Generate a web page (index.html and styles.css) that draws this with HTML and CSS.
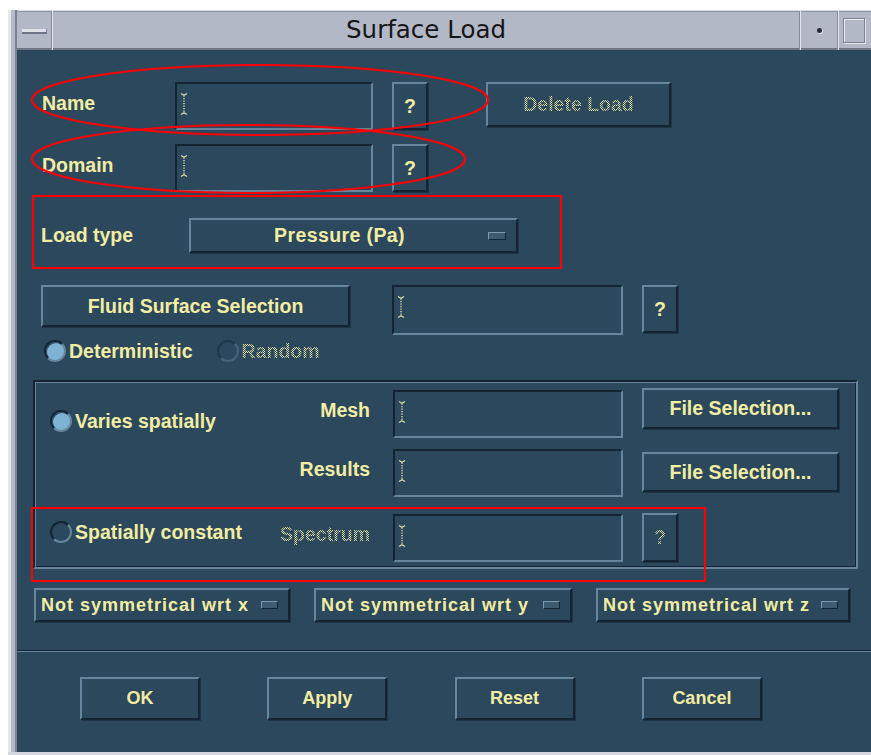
FILE: index.html
```html
<!DOCTYPE html>
<html lang="en">
<head>
<meta charset="utf-8">
<title>Surface Load</title>
<link rel="stylesheet" href="styles.css">
</head>
<body>
<svg class="defs" width="0" height="0" aria-hidden="true">
  <symbol id="ibeam" viewBox="0 0 8 24">
    <path d="M1 1.5 L4 3.2 L7 1.5 M1 22.5 L4 20.8 L7 22.5" fill="none" stroke="#e2dda4" stroke-width="1.2"/>
    <path d="M4 3.5 V20.5" fill="none" stroke="#e2dda4" stroke-width="1.4" stroke-dasharray="1.2 1.3"/>
  </symbol>
</svg>

<div class="window">
  <div class="frame-left"></div>
  <div class="window-main">
    <div class="titlebar">
      <div class="tb-cell tb-menu"><span class="tb-dash"></span></div>
      <div class="tb-title">Surface Load</div>
      <div class="tb-cell tb-min"><span class="tb-dot"></span></div>
      <div class="tb-cell tb-max"><span class="tb-square"></span></div>
    </div>

    <div class="dialog">
      <div class="content">
        <div class="row row-name">
          <span class="label lab-top">Name</span>
          <div class="field f-top"><svg class="ibeam"><use href="#ibeam"/></svg></div>
          <button class="btn q">?</button>
          <button class="btn del"><span class="dis">Delete Load</span></button>
        </div>

        <div class="row row-domain">
          <span class="label lab-top">Domain</span>
          <div class="field f-top"><svg class="ibeam"><use href="#ibeam"/></svg></div>
          <button class="btn q">?</button>
        </div>

        <div class="row row-type">
          <span class="label lab-type">Load type</span>
          <button class="btn option opt-type">
            <span class="opt-text">Pressure (Pa)</span>
            <span class="cascade"></span>
          </button>
        </div>

        <div class="row row-fluid">
          <button class="btn fluid">Fluid Surface Selection</button>
          <div class="field f-fluid"><svg class="ibeam"><use href="#ibeam"/></svg></div>
          <button class="btn q q-fluid">?</button>
        </div>

        <div class="row row-radio">
          <span class="radio on"></span>
          <span class="label rlab">Deterministic</span>
          <span class="radio off dim rand-radio"></span>
          <span class="label rlab"><span class="dis">Random</span></span>
        </div>

        <div class="frame">
          <div class="frow frow-mesh">
            <div class="fleft fleft-varies">
              <span class="radio on"></span>
              <span class="label rlab">Varies spatially</span>
            </div>
            <span class="label flabel">Mesh</span>
            <div class="field f-frame"><svg class="ibeam"><use href="#ibeam"/></svg></div>
            <button class="btn filesel fs-mesh">File Selection...</button>
          </div>
          <div class="frow frow-results">
            <div class="fleft"></div>
            <span class="label flabel">Results</span>
            <div class="field f-frame"><svg class="ibeam"><use href="#ibeam"/></svg></div>
            <button class="btn filesel fs-results">File Selection...</button>
          </div>
          <div class="frow frow-spec">
            <div class="fleft fleft-const">
              <span class="radio off"></span>
              <span class="label rlab">Spatially constant</span>
            </div>
            <span class="label flabel"><span class="dis">Spectrum</span></span>
            <div class="field f-frame"><svg class="ibeam"><use href="#ibeam"/></svg></div>
            <button class="btn q q-spec"><span class="dis">?</span></button>
          </div>
        </div>

        <div class="row row-sym">
          <button class="btn option sym sym-x"><span class="sym-text">Not symmetrical wrt x</span><span class="cascade"></span></button>
          <button class="btn option sym sym-y"><span class="sym-text">Not symmetrical wrt y</span><span class="cascade"></span></button>
          <button class="btn option sym sym-z"><span class="sym-text">Not symmetrical wrt z</span><span class="cascade"></span></button>
        </div>
      </div>

      <div class="sep"></div>

      <div class="actions">
        <button class="btn act">OK</button>
        <button class="btn act">Apply</button>
        <button class="btn act">Reset</button>
        <button class="btn act">Cancel</button>
      </div>

      <!-- red markup drawn over the form -->
      <svg class="marks" width="880" height="702" viewBox="0 0 880 702">
        <ellipse cx="243" cy="50" rx="228" ry="35"/>
        <ellipse cx="231.5" cy="109" rx="216.5" ry="34"/>
        <rect x="16" y="146" width="528" height="72"/>
        <rect x="15" y="458" width="673" height="73"/>
      </svg>
    </div>
  </div>
</div>
</body>
</html>
```

FILE: styles.css
```css
* {
  box-sizing: border-box;
}

html,
body {
  margin: 0;
  padding: 0;
}

body {
  width: 871px;
  height: 755px;
  overflow: hidden;
  background: #ffffff;
  font-family: "Liberation Sans", Arial, sans-serif;
}

.defs {
  position: absolute;
  width: 0;
  height: 0;
}

/* ---------- window frame ---------- */
.window {
  margin: 10px 0 0 8px;
  width: 880px;
  height: 745px;
  display: flex;
  border-bottom: 3px solid #d4d7df;
}

.frame-left {
  width: 9px;
  flex: none;
  background: linear-gradient(to right, #e6e8ee 0 3px, #b6bbc8 3px 7px, #7a8192 7px);
}

.window-main {
  flex: 1;
  display: flex;
  flex-direction: column;
}

.titlebar {
  height: 40px;
  flex: none;
  display: flex;
  background: #b3b8c7;
  border-top: 1px solid #d9dce4;
  box-shadow: inset 0 1px 0 #8d93a3, inset 0 -2px 0 #6f7687;
}

.tb-cell {
  position: relative;
  flex: none;
}

.tb-menu {
  width: 35px;
  border-right: 1px solid #858b9b;
}

.tb-dash {
  position: absolute;
  left: 5px;
  top: 18px;
  width: 25px;
  height: 5px;
  background: #dfe2e8;
  border-bottom: 2px solid #6f7586;
  border-right: 1px solid #7d8393;
}

.tb-title {
  flex: 1;
  text-align: center;
  font-family: "DejaVu Sans", sans-serif;
  font-size: 24.5px;
  line-height: 38px;
  color: #161616;
  border-left: 1px solid #e2e5ec;
  border-right: 1px solid #858b9b;
}

.tb-min {
  width: 38px;
  border-left: 1px solid #e2e5ec;
  border-right: 1px solid #858b9b;
}

.tb-dot {
  position: absolute;
  left: 16px;
  top: 17px;
  width: 5px;
  height: 5px;
  border-radius: 50%;
  background: #2a2c33;
  box-shadow: 1px 1px 0 #e6e8ee;
}

.tb-max {
  width: 50px;
  border-left: 1px solid #e2e5ec;
}

.tb-square {
  position: absolute;
  left: 4px;
  top: 7px;
  width: 22px;
  height: 25px;
  border: 1px solid #7b8192;
  box-shadow: inset 1px 1px 0 #eef0f4, 1px 1px 0 #e4e6ec;
}

/* ---------- dialog body ---------- */
.dialog {
  flex: 1;
  position: relative;
  background: #2b485d;
}

.content {
  padding: 32px 0 0 16px;
}

.row {
  display: flex;
  align-items: flex-start;
}

.label {
  color: #f3eda3;
  font-weight: bold;
  font-size: 19.5px;
  white-space: nowrap;
}

/* stippled insensitive text */
.dis {
  color: transparent;
  background: repeating-conic-gradient(#ebe4a0 0 25%, transparent 0 50%) 0 0 / 2px 2px;
  -webkit-background-clip: text;
  background-clip: text;
}

/* bevels */
.btn {
  margin: 0;
  padding: 0;
  font-family: "Liberation Sans", Arial, sans-serif;
  font-weight: bold;
  font-size: 19.5px;
  color: #f3eda3;
  background: #2b485d;
  border: 2px solid;
  border-color: #67869d #142433 #142433 #67869d;
  box-shadow: 1px 1px 0 #1f3547;
  white-space: nowrap;
  display: flex;
  align-items: center;
  justify-content: center;
}

.field {
  flex: none;
  background: #2b485d;
  border: 2px solid;
  border-color: #142433 #67869d #67869d #142433;
  padding: 8px 0 0 3px;
}

.ibeam {
  display: block;
  width: 8px;
  height: 24px;
}

/* name / domain */
.row-name {
  height: 48px;
  margin-left: 9px;
}

.row-domain {
  height: 48px;
  margin-left: 9px;
  margin-top: 14px;
}

.lab-top {
  width: 133px;
  line-height: 42px;
}

.f-top {
  width: 198px;
  height: 48px;
}

.q {
  width: 36px;
  height: 48px;
  margin-left: 19px;
}

.del {
  width: 185px;
  height: 45px;
  margin-left: 58px;
}

/* load type */
.row-type {
  height: 35px;
  margin-top: 26px;
  margin-left: 8px;
}

.lab-type {
  width: 148px;
  line-height: 35px;
}

.option {
  justify-content: flex-start;
}

.opt-type {
  width: 329px;
  height: 35px;
}

.opt-text {
  flex: 1;
  text-align: center;
  letter-spacing: 0.4px;
}

.cascade {
  flex: none;
  width: 18px;
  height: 8px;
  background: #3d5c72;
  border: 1px solid;
  border-color: #7c98ad #142433 #142433 #7c98ad;
  margin-right: 10px;
}

/* fluid surface */
.row-fluid {
  margin-top: 32px;
  margin-left: 8px;
}

.fluid {
  width: 309px;
  height: 42px;
}

.f-fluid {
  width: 231px;
  height: 50px;
  margin-left: 42px;
}

/* radios */
.row-radio {
  height: 24px;
  margin-top: 4px;
  margin-left: 11px;
  align-items: center;
}

.radio {
  flex: none;
  width: 22px;
  height: 22px;
  border-radius: 50%;
  border: 2px solid;
  border-color: #142433 #67869d #67869d #142433;
}

.radio.on {
  background: #7db2d5;
  box-shadow: inset 1px 1px 0 #2a4a62;
}

.radio.dim {
  opacity: 0.45;
}

.rlab {
  margin-left: 3px;
}

.rand-radio {
  margin-left: 24px;
}

/* etched group */
.frame {
  margin-top: 17px;
  width: 825px;
  height: 189px;
  border: 2px solid;
  border-color: #142433 #67869d #67869d #142433;
  box-shadow: inset 1px 1px 0 #67869d, inset -1px -1px 0 #142433;
  padding: 8px 0 0 15px;
}

.frow {
  display: flex;
  align-items: flex-start;
  height: 48px;
}

.frow-results {
  margin-top: 11px;
}

.frow-spec {
  margin-top: 17px;
}

.fleft {
  width: 228px;
  height: 48px;
  flex: none;
  display: flex;
  align-items: center;
}

.fleft-varies {
  padding-top: 14px;
}

.fleft-const {
  padding-bottom: 12px;
}

.flabel {
  width: 92px;
  text-align: right;
  line-height: 40px;
}

.f-frame {
  width: 230px;
  height: 48px;
  margin-left: 23px;
}

.filesel {
  width: 197px;
  height: 41px;
  margin-left: 19px;
}

.fs-mesh {
  margin-top: -2px;
}

.fs-results {
  margin-top: 3px;
  height: 40px;
}

.q-spec {
  margin-top: -1px;
  height: 49px;
}

/* symmetry menus */
.row-sym {
  margin-top: 19px;
  margin-left: 1px;
  gap: 24px;
}

.sym {
  height: 34px;
  font-size: 18px;
  padding-left: 5px;
}

.sym-x {
  width: 256px;
}

.sym-y {
  width: 258px;
}

.sym-z {
  width: 254px;
}

.sym-text {
  flex: 1;
  text-align: left;
  letter-spacing: 1px;
}

.sym .cascade {
  width: 17px;
  margin-left: 6px;
}

/* separator and action area */
.sep {
  margin-top: 28px;
  height: 2px;
  border-top: 1px solid #142433;
  border-bottom: 1px solid #67869d;
}

.actions {
  display: flex;
  padding: 25px 0 0 63px;
  gap: 67.3px;
}

.act {
  width: 120px;
  height: 43px;
  font-size: 18px;
}

/* red markup */
.marks {
  position: absolute;
  left: 0;
  top: 0;
  pointer-events: none;
}

.marks ellipse,
.marks rect {
  fill: none;
  stroke: #ff0000;
  stroke-width: 2;
}
```
